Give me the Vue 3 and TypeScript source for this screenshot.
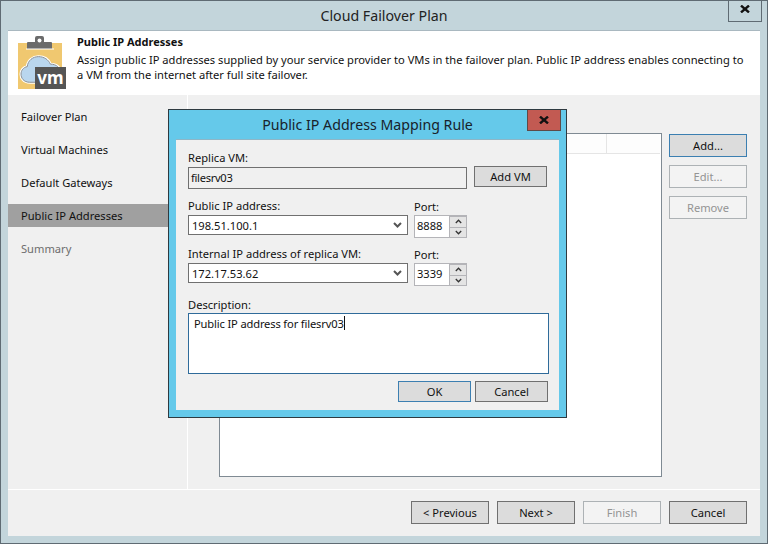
<script setup lang="ts">
const steps = [
  { label: 'Failover Plan', state: '' },
  { label: 'Virtual Machines', state: '' },
  { label: 'Default Gateways', state: '' },
  { label: 'Public IP Addresses', state: 'active' },
  { label: 'Summary', state: 'muted' },
]
</script>

<template>
  <div class="window">
    <div class="titlebar">
      <span class="title">Cloud Failover Plan</span>
      <button class="win-close">
        <svg width="10" height="8" viewBox="0 0 10 8"><path d="M1 .6 L9 7.400 M9 .6 L1 7.400" stroke="#111" stroke-width="2.400" fill="none" /></svg>
      </button>
    </div>
    <div class="client">
      <header class="banner">
        <svg class="banner-icon" width="60" height="54" viewBox="0 0 60 54">
          <rect x="0" y="7" width="44" height="46" fill="#f0c870" />
          <path d="M9 13 V7 a1 1 0 0 1 1-1 h7 V2 a2 2 0 0 1 2-2 h5 a2 2 0 0 1 2 2 v4 h7 a1 1 0 0 1 1 1 v6 z" fill="#6b6b6b" />
          <path d="M8 13 H36" stroke="#fff" stroke-width="1" />
          <circle cx="21.500" cy="4.500" r="2" fill="#fff" />
          <g transform="translate(-2,-10) scale(1.25)">
            <path d="M17 45 h-6 c-5 0-7-3.500-7-6.500 c0-3 2-5.500 5-6 c.5-5 4.500-8 9-8 c4.500 0 8 2.500 9.500 6 c5 0 8 3 8 7 v7.500 z" fill="#b9d6ee" stroke="#fff" stroke-width="2.400" />
            <path d="M17 45 h-6 c-5 0-7-3.500-7-6.500 c0-3 2-5.500 5-6 c.5-5 4.500-8 9-8 c4.500 0 8 2.500 9.500 6 c5 0 8 3 8 7 v7.500 z" fill="#b9d6ee" stroke="#8a8f92" stroke-width=".8" />
          </g>
          <rect x="17" y="31" width="31" height="22" fill="#555" />
          <text x="32.500" y="47.500" class="vm">vm</text>
        </svg>
        <div class="banner-text">
          <h1>Public IP Addresses</h1>
          <p>Assign public IP addresses supplied by your service provider to VMs in the failover plan. Public IP address enables connecting to a VM from the internet after full site failover.</p>
        </div>
      </header>
      <div class="middle">
        <nav class="sidebar">
          <div v-for="s in steps" :key="s.label" class="step" :class="s.state">{{ s.label }}</div>
        </nav>
        <main class="pane">
          <div class="listbox">
            <div class="list-head">
              <span class="cell grow"></span>
              <span class="cell"></span>
            </div>
          </div>
          <div class="side-buttons">
            <button class="btn focus">Add...</button>
            <button class="btn disabled">Edit...</button>
            <button class="btn disabled">Remove</button>
          </div>
        </main>
      </div>
      <footer class="footer">
        <button class="btn">&lt; Previous</button>
        <button class="btn">Next &gt;</button>
        <button class="btn disabled">Finish</button>
        <button class="btn">Cancel</button>
      </footer>
    </div>

    <section class="dialog">
      <div class="dlg-title">
        <span>Public IP Address Mapping Rule</span>
        <button class="dlg-close">
          <svg width="10" height="8" viewBox="0 0 10 8"><path d="M1 .6 L9 7.400 M9 .6 L1 7.400" stroke="#111" stroke-width="2.400" fill="none" /></svg>
        </button>
      </div>
      <div class="dlg-body">
        <label class="lbl first">Replica VM:</label>
        <div class="row replica">
          <div class="readonly">filesrv03</div>
          <button class="btn addvm">Add VM</button>
        </div>
        <div class="row fields">
          <div class="field-main">
            <label class="lbl">Public IP address:</label>
            <div class="combo">
              <span>198.51.100.1</span>
              <svg width="9" height="6" viewBox="0 0 9 6"><path d="M1 1 L4.500 4.500 L8 1" stroke="#555" stroke-width="2" fill="none" /></svg>
            </div>
          </div>
          <div class="field-port">
            <label class="lbl">Port:</label>
            <div class="spin">
              <span class="spin-val">8888</span>
              <div class="spin-btns">
                <span class="arrow"><svg width="7" height="5" viewBox="0 0 7 5"><path d="M.8 4 L3.500 1.200 L6.200 4" stroke="#333" stroke-width="1.300" fill="none" /></svg></span>
                <span class="arrow"><svg width="7" height="5" viewBox="0 0 7 5"><path d="M.8 1 L3.500 3.800 L6.200 1" stroke="#333" stroke-width="1.300" fill="none" /></svg></span>
              </div>
            </div>
          </div>
        </div>
        <div class="row fields second">
          <div class="field-main">
            <label class="lbl">Internal IP address of replica VM:</label>
            <div class="combo">
              <span>172.17.53.62</span>
              <svg width="9" height="6" viewBox="0 0 9 6"><path d="M1 1 L4.500 4.500 L8 1" stroke="#555" stroke-width="2" fill="none" /></svg>
            </div>
          </div>
          <div class="field-port">
            <label class="lbl">Port:</label>
            <div class="spin">
              <span class="spin-val">3339</span>
              <div class="spin-btns">
                <span class="arrow"><svg width="7" height="5" viewBox="0 0 7 5"><path d="M.8 4 L3.500 1.200 L6.200 4" stroke="#333" stroke-width="1.300" fill="none" /></svg></span>
                <span class="arrow"><svg width="7" height="5" viewBox="0 0 7 5"><path d="M.8 1 L3.500 3.800 L6.200 1" stroke="#333" stroke-width="1.300" fill="none" /></svg></span>
              </div>
            </div>
          </div>
        </div>
        <label class="lbl desc">Description:</label>
        <div class="textarea">Public IP address for filesrv03<span class="caret"></span></div>
        <div class="dlg-actions">
          <button class="btn focus small">OK</button>
          <button class="btn small">Cancel</button>
        </div>
      </div>
    </section>
  </div>
</template>

<style>
html, body { margin: 0; padding: 0; }
</style>

<style scoped>
* { box-sizing: border-box; }
.window {
  position: relative;
  width: 768px;
  height: 544px;
  overflow: hidden;
  display: flex;
  flex-direction: column;
  background: #c3d5db;
  border: 1px solid #5f6b73;
  padding: 0 7px 7px 7px;
  font: 11.15px/15px "Noto Sans", Tahoma, sans-serif;
  color: #111;
}
.titlebar {
  height: 29px;
  flex: none;
  position: relative;
  display: flex;
  align-items: center;
  justify-content: center;
  font-size: 14.2px;
}
.title { color: #222; }
.win-close {
  position: absolute;
  right: -2px;
  top: -1px;
  width: 34px;
  height: 22px;
  padding: 0 0 3px;
  background: #c3d5db;
  border: 1px solid #5f6b73;
  border-top: none;
  display: flex;
  align-items: center;
  justify-content: center;
}
.client {
  flex: 1;
  display: flex;
  flex-direction: column;
  background: #f0f0f0;
  border-top: 1px solid #a9b8c0;
  min-height: 0;
}
.banner {
  height: 64px;
  flex: none;
  background: #fff;
  position: relative;
  padding: 3px 8px 0 69px;
}
.banner-icon {
  position: absolute;
  left: 10px;
  top: 5px;
}
.vm {
  font: bold 17px "Noto Sans", sans-serif;
  fill: #fff;
  text-anchor: middle;
}
.banner h1 {
  margin: 0 0 3px;
  font-size: 11px;
  font-weight: 700;
  line-height: 15px;
}
.banner p {
  margin: 0;
  line-height: 15px;
}
.middle {
  flex: 1;
  display: flex;
  min-height: 0;
}
.sidebar {
  width: 180px;
  flex: none;
  padding-top: 10px;
  border-right: 1px solid #fff;
  display: flex;
  flex-direction: column;
  gap: 10px;
}
.step {
  height: 23px;
  line-height: 23px;
  padding-left: 13px;
}
.step.active { background: #a0a0a0; }
.step.muted { color: #6d6d6d; }
.pane {
  flex: 1;
  display: flex;
  padding: 38px 13px 12px 31px;
  gap: 7px;
}
.listbox {
  width: 443px;
  background: #fff;
  border: 1px solid #7f8a93;
}
.list-head {
  display: flex;
  height: 20px;
  border-bottom: 1px solid #e5e5e5;
  margin-right: 1px;
}
.cell { width: 53px; background: #fdfdfd; }
.cell.grow { flex: 1; border-right: 1px solid #e5e5e5; }
.side-buttons {
  display: flex;
  flex-direction: column;
  gap: 8px;
  padding-top: 1px;
}
.btn {
  width: 78px;
  height: 23px;
  padding: 0;
  background: #dcdcdc;
  border: 1px solid #707070;
  font: inherit;
  color: #111;
  line-height: 19px;
}
.btn.focus { border-color: #3c7fb1; }
.btn.disabled {
  background: #f3f3f3;
  border-color: #adb2b5;
  color: #949494;
}
.footer {
  height: 47px;
  flex: none;
  display: flex;
  gap: 8px;
  justify-content: flex-end;
  padding: 11px 13px 0 0;
  border-top: 1px solid #fff;
}
.dialog {
  position: absolute;
  left: 167px;
  top: 108px;
  width: 399px;
  height: 309px;
  background: #65c9ea;
  border: 1px solid #2e3a40;
  padding: 0 7px 7px 7px;
  display: flex;
  flex-direction: column;
}
.dlg-title {
  height: 29px;
  flex: none;
  display: flex;
  align-items: center;
  justify-content: center;
  font-size: 14.2px;
  color: #18222a;
  position: relative;
}
.dlg-close {
  position: absolute;
  right: -2px;
  top: 0;
  width: 34px;
  height: 21px;
  padding: 0 0 1px;
  background: #c25a52;
  border: 1px solid #5e4a48;
  border-top: none;
  display: flex;
  align-items: center;
  justify-content: center;
}
.dlg-body {
  flex: 1;
  background: #f0f0f0;
  border-top: 1px solid #8eb6c6;
  padding: 0 11px 0 12px;
  display: flex;
  flex-direction: column;
}
.lbl {
  display: block;
  height: 15px;
  line-height: 15px;
}
.first { margin-top: 10px; }
.row { display: flex; }
.replica { margin-top: 2px; gap: 7px; align-items: flex-start; }
.readonly {
  width: 279px;
  height: 22px;
  border: 1px solid #707070;
  background: #f0f0f0;
  padding-left: 2px;
  line-height: 19px;
  letter-spacing: -0.3px;
}
.addvm { width: 73px; height: 21px; margin-top: -1px; line-height: 17px; }
.fields { margin-top: 9px; gap: 6px; align-items: flex-start; }
.second { margin-top: 8px; }
.field-main { width: 220px; }
.field-main .lbl { margin-bottom: 2px; }
.combo {
  height: 20px;
  background: #fff;
  border: 1px solid #707070;
  display: flex;
  align-items: center;
  justify-content: space-between;
  padding: 0 5px 0 3px;
}
.field-port { width: 53px; padding-top: 1px; }
.field-port .lbl { margin-bottom: 1px; }
.spin {
  height: 23px;
  display: flex;
  border: 1px solid #b4b4b8;
  background: #fff;
}
.spin-val { flex: 1; padding-left: 2px; line-height: 20px; }
.spin-btns {
  width: 17px;
  background: #b4b4b8;
  display: flex;
  flex-direction: column;
  gap: 1px;
  padding: 1px 0 0 1px;
}
.arrow {
  flex: 1;
  background: #e4e4e4;
  display: flex;
  align-items: center;
  justify-content: center;
}
.desc { margin-top: 11px; }
.textarea {
  margin-top: 1px;
  width: 361px;
  height: 61px;
  background: #fff;
  border: 1px solid #2f6b9a;
  padding: 1px 5px 0;
  line-height: 17px;
  letter-spacing: -0.15px;
}
.caret {
  display: inline-block;
  width: 1px;
  height: 14px;
  background: #111;
  vertical-align: -2px;
}
.dlg-actions {
  margin-top: 7px;
  display: flex;
  gap: 4px;
  padding-left: 210px;
}
.small { width: 73px; height: 21px; line-height: 17px; }
</style>
